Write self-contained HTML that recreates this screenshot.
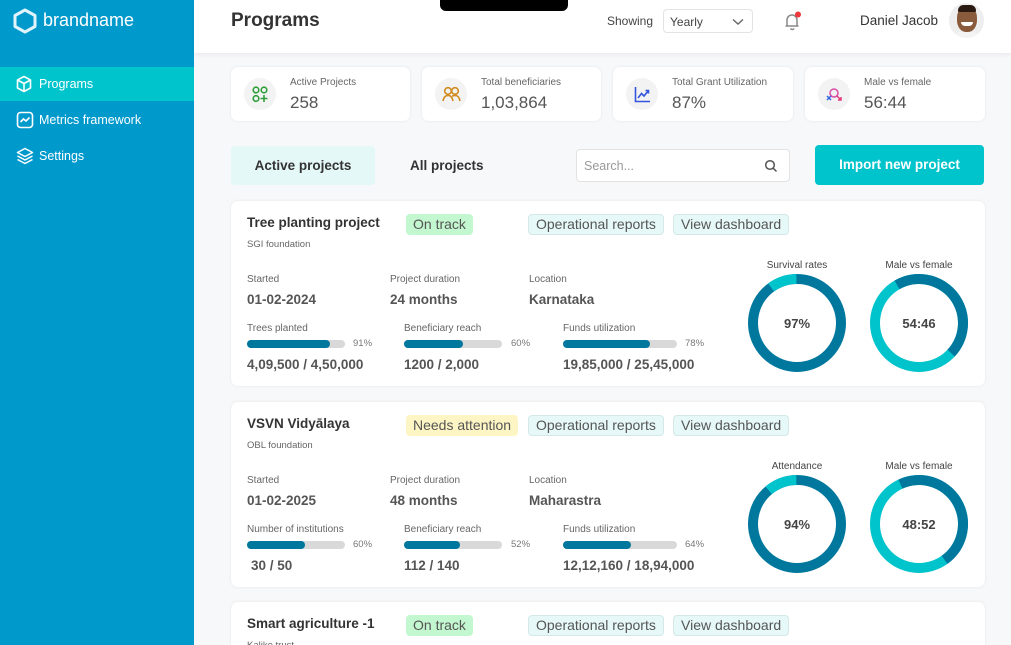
<!DOCTYPE html>
<html style="width:1011px;height:645px;overflow:hidden"><head><meta charset="utf-8"><style>
*{margin:0;padding:0;box-sizing:border-box}
body{width:1011px;height:645px;overflow:hidden;font-family:"Liberation Sans",sans-serif;background:#f7f8fa;position:relative;color:#333}
.a{position:absolute}
.side{left:0;top:0;width:194px;height:645px;background:#0099cc}
.nav{left:0;width:194px;height:34px;color:#fff;font-size:12.5px;line-height:34px;padding-left:39px}
.nav svg{position:absolute;left:16px;top:8px}
.hdr{left:194px;top:0;width:817px;height:53px;background:#fff;box-shadow:0 2px 4px rgba(0,0,0,.06)}
.stat{top:67px;height:54px;background:#fff;border-radius:7px;box-shadow:0 0 3px rgba(0,0,0,.08)}
.stat .ic{position:absolute;left:13px;top:11px;width:32px;height:32px;border-radius:50%;background:#f3f3f3}
.stat .l{position:absolute;left:59px;top:10px;font-size:10px;color:#666}
.stat .v{position:absolute;left:59px;top:26px;font-size:17px;color:#555}
.card{left:231px;width:754px;height:185px;background:#fff;border-radius:7px;box-shadow:0 0 3px rgba(0,0,0,.08);overflow:hidden}
.card .t{position:absolute;left:16px;top:14px;font-size:13.5px;font-weight:bold;color:#333}
.card .s{position:absolute;left:16px;top:38px;font-size:9.5px;color:#666}
.badge{position:absolute;top:13px;height:21px;line-height:21px;border-radius:4px;font-size:14px;padding:0 7px;color:#555}
.ob{background:#e6f8f8;border:1px solid #d4e8e8;line-height:19px}
.lb{position:absolute;font-size:10px;color:#666}
.vl{position:absolute;font-size:13.5px;color:#555;font-weight:bold}
.bar{position:absolute;height:8px;border-radius:4px;background:#d9d9d9;top:139px}
.bar i{display:block;height:8px;border-radius:4px;background:#00789e}
.pc{position:absolute;top:137px;font-size:9.5px;color:#777}
.dl{position:absolute;top:59px;font-size:10px;color:#444;width:100px;text-align:center}
.dn{position:absolute;top:73px}
</style></head><body>
<div class="a side"></div>
<svg class="a" style="left:12px;top:8px" width="26" height="26" viewBox="0 0 26 26"><path d="M13 2 L23 7.5 V18.5 L13 24 L3 18.5 V7.5 Z" fill="none" stroke="#dff4fb" stroke-width="3" stroke-linejoin="round"/></svg>
<div class="a" style="left:43px;top:10px;color:#fff;font-size:18px">brandname</div>
<div class="a nav" style="top:67px;background:#00c4cc"><svg width="16" height="18" viewBox="0 0 16 18" fill="none" stroke="#fff" stroke-width="1.6" stroke-linejoin="round"><path d="M8 1.5 L14.5 5 V13 L8 16.5 L1.5 13 V5 Z M1.5 5 L8 8.5 L14.5 5 M8 8.5 V16.5"/></svg>Programs</div>
<div class="a nav" style="top:103px"><svg width="18" height="18" viewBox="0 0 18 18" fill="none" stroke="#fff" stroke-width="1.6"><rect x="1.5" y="1.5" width="15" height="15" rx="3"/><path d="M4.5 11 L7.5 8 L10 10 L13.5 6.5"/></svg>Metrics framework</div>
<div class="a nav" style="top:139px"><svg width="18" height="18" viewBox="0 0 18 18" fill="none" stroke="#fff" stroke-width="1.5" stroke-linejoin="round"><path d="M9 1.5 L16.5 5.5 L9 9.5 L1.5 5.5 Z M1.5 9 L9 13 L16.5 9 M1.5 12.5 L9 16.5 L16.5 12.5"/></svg>Settings</div>

<div class="a hdr"></div>
<div class="a" style="left:440px;top:0;width:128px;height:11px;background:#000;border-radius:0 0 6px 6px"></div>
<div class="a" style="left:231px;top:10px;font-size:19px;font-weight:bold;color:#333">Programs</div>
<div class="a" style="left:607px;top:14px;font-size:12px;color:#444">Showing</div>
<div class="a" style="left:663px;top:9px;width:90px;height:24px;border:1px solid #e3e3e3;border-radius:4px;font-size:12px;color:#444;padding:5px 0 0 6px">Yearly
<svg class="a" style="left:68px;top:8px" width="12" height="8" viewBox="0 0 12 8"><path d="M1 1.5 L6 6 L11 1.5" fill="none" stroke="#666" stroke-width="1.4"/></svg></div>
<svg class="a" style="left:782px;top:10px" width="22" height="22" viewBox="0 0 22 22" fill="none" stroke="#888" stroke-width="1.5"><path d="M5 16 V10 a5 5 0 0 1 10 0 V16 Z M3.5 16 H16.5 M8.5 18.5 a2 2 0 0 0 3.5 0"/><circle cx="16" cy="4.5" r="3" fill="#f0373c" stroke="none"/></svg>
<div class="a" style="left:860px;top:13px;font-size:13.5px;color:#333">Daniel Jacob</div>
<div class="a" style="left:949px;top:3px;width:35px;height:35px;border-radius:50%;background:#eee;overflow:hidden">
<div class="a" style="left:8px;top:3px;width:20px;height:26px;border-radius:45%;background:#8a5a3c"></div>
<div class="a" style="left:9px;top:2px;width:18px;height:7px;border-radius:8px 8px 2px 2px;background:#2a1a12"></div>
<div class="a" style="left:12px;top:19px;width:12px;height:4px;border-radius:0 0 6px 6px;background:#fff"></div>
<div class="a" style="left:4px;top:29px;width:28px;height:10px;border-radius:8px 8px 0 0;background:#f4f4f4"></div></div>

<div class="a stat" style="left:231px;width:179px"><div class="ic"><svg style="position:absolute;left:8px;top:8px" width="17" height="17" viewBox="0 0 17 17" fill="none" stroke="#2e9e3a" stroke-width="1.6"><circle cx="4" cy="4" r="2.8"/><circle cx="12" cy="4" r="2.8"/><circle cx="4" cy="12.5" r="2.8"/><path d="M12 9 V16 M8.5 12.5 H15.5"/></svg></div><div class="l">Active Projects</div><div class="v">258</div></div>
<div class="a stat" style="left:422px;width:179px"><div class="ic"><svg style="position:absolute;left:7px;top:8px" width="19" height="16" viewBox="0 0 19 16" fill="none" stroke="#d08a1e" stroke-width="1.6"><circle cx="6" cy="5" r="3.3"/><circle cx="13" cy="5" r="3.3"/><path d="M1 15 Q2 9.5 6 9.5 Q10 9.5 11 15 M10 10 Q12 9.5 14 9.5 Q17 10 18 15"/></svg></div><div class="l">Total beneficiaries</div><div class="v">1,03,864</div></div>
<div class="a stat" style="left:613px;width:180px"><div class="ic"><svg style="position:absolute;left:8px;top:8px" width="17" height="17" viewBox="0 0 17 17" fill="none" stroke="#3355dd" stroke-width="1.6"><path d="M1.5 1 V15.5 H16 M4 12 L7.5 7.5 L10 10 L14.5 4.5 M11.5 4.5 H14.5 V7.5"/></svg></div><div class="l">Total Grant Utilization</div><div class="v">87%</div></div>
<div class="a stat" style="left:805px;width:180px"><div class="ic"><svg style="position:absolute;left:7px;top:7px" width="19" height="19" viewBox="0 0 19 19" fill="none" stroke-width="1.5"><circle cx="9" cy="8" r="4" stroke="#d94ea8"/><path d="M12 11 L16 15 M16 12 V15 H13" stroke="#e33a7a"/><path d="M2 11 L6 15 M6 11 L2 15" stroke="#3366dd"/></svg></div><div class="l">Male vs female</div><div class="v">56:44</div></div>

<div class="a" style="left:231px;top:146px;width:144px;height:39px;background:#e5f8f8;border-radius:4px;font-size:13.5px;font-weight:bold;color:#333;text-align:center;line-height:39px">Active projects</div>
<div class="a" style="left:410px;top:158px;font-size:13.5px;font-weight:bold;color:#333">All projects</div>
<div class="a" style="left:576px;top:149px;width:214px;height:33px;background:#fff;border:1px solid #e3e3e3;border-radius:4px;font-size:12.5px;color:#999;padding:9px 0 0 7px">Search...
<svg class="a" style="left:187px;top:9px" width="14" height="14" viewBox="0 0 14 14" fill="none" stroke="#555" stroke-width="1.5"><circle cx="6" cy="6" r="4.3"/><path d="M9.2 9.2 L12.5 12.5"/></svg></div>
<div class="a" style="left:815px;top:145px;width:169px;height:40px;background:#00c4cc;border-radius:4px;color:#fff;font-size:13.5px;font-weight:bold;text-align:center;line-height:40px">Import new project</div>

<div class="a card" style="top:201px">
<div class="t">Tree planting project</div><div class="s">SGI foundation</div>
<div class="badge" style="left:175px;background:#c3f7cf">On track</div>
<div class="badge ob" style="left:297px">Operational reports</div>
<div class="badge ob" style="left:442px">View dashboard</div>
<div class="lb" style="left:16px;top:73px">Started</div><div class="lb" style="left:159px;top:73px">Project duration</div><div class="lb" style="left:298px;top:73px">Location</div>
<div class="vl" style="left:16px;top:91px">01-02-2024</div><div class="vl" style="left:159px;top:91px">24 months</div><div class="vl" style="left:298px;top:91px">Karnataka</div>
<div class="lb" style="left:16px;top:122px">Trees planted</div><div class="lb" style="left:173px;top:122px">Beneficiary reach</div><div class="lb" style="left:332px;top:122px">Funds utilization</div>
<div class="bar" style="left:16px;width:98px"><i style="width:83px"></i></div><div class="pc" style="left:122px">91%</div>
<div class="bar" style="left:173px;width:98px"><i style="width:59px"></i></div><div class="pc" style="left:280px">60%</div>
<div class="bar" style="left:332px;width:114px"><i style="width:87px"></i></div><div class="pc" style="left:454px">78%</div>
<div class="vl" style="left:16px;top:156px">4,09,500 / 4,50,000</div><div class="vl" style="left:173px;top:156px">1200 / 2,000</div><div class="vl" style="left:332px;top:156px">19,85,000 / 25,45,000</div>
<div class="dl" style="left:516px">Survival rates</div><div class="dl" style="left:638px">Male vs female</div>
<svg class="dn" style="left:517px" width="98" height="98" viewBox="0 0 98 98"><circle cx="49" cy="49" r="44" fill="none" stroke="#00789e" stroke-width="10"/><circle cx="49" cy="49" r="44" fill="none" stroke="#00c4cc" stroke-width="10" stroke-dasharray="27 260" transform="rotate(-126 49 49)"/><text x="49" y="54" text-anchor="middle" font-size="13" font-weight="bold" fill="#444" font-family="Liberation Sans">97%</text></svg>
<svg class="dn" style="left:639px" width="98" height="98" viewBox="0 0 98 98"><circle cx="49" cy="49" r="44" fill="none" stroke="#00c4cc" stroke-width="10"/><circle cx="49" cy="49" r="44" fill="none" stroke="#00789e" stroke-width="10" stroke-dasharray="125 160" transform="rotate(-120 49 49)"/><text x="49" y="54" text-anchor="middle" font-size="13" font-weight="bold" fill="#444" font-family="Liberation Sans">54:46</text></svg>
</div>

<div class="a card" style="top:402px">
<div class="t">VSVN Vidyālaya</div><div class="s">OBL foundation</div>
<div class="badge" style="left:175px;background:#fdf5c4">Needs attention</div>
<div class="badge ob" style="left:297px">Operational reports</div>
<div class="badge ob" style="left:442px">View dashboard</div>
<div class="lb" style="left:16px;top:73px">Started</div><div class="lb" style="left:159px;top:73px">Project duration</div><div class="lb" style="left:298px;top:73px">Location</div>
<div class="vl" style="left:16px;top:91px">01-02-2025</div><div class="vl" style="left:159px;top:91px">48 months</div><div class="vl" style="left:298px;top:91px">Maharastra</div>
<div class="lb" style="left:16px;top:122px">Number of institutions</div><div class="lb" style="left:173px;top:122px">Beneficiary reach</div><div class="lb" style="left:332px;top:122px">Funds utilization</div>
<div class="bar" style="left:16px;width:98px"><i style="width:58px"></i></div><div class="pc" style="left:122px">60%</div>
<div class="bar" style="left:173px;width:98px"><i style="width:56px"></i></div><div class="pc" style="left:280px">52%</div>
<div class="bar" style="left:332px;width:114px"><i style="width:68px"></i></div><div class="pc" style="left:454px">64%</div>
<div class="vl" style="left:20px;top:156px">30 / 50</div><div class="vl" style="left:173px;top:156px">112 / 140</div><div class="vl" style="left:332px;top:156px">12,12,160 / 18,94,000</div>
<div class="dl" style="left:516px">Attendance</div><div class="dl" style="left:638px">Male vs female</div>
<svg class="dn" style="left:517px" width="98" height="98" viewBox="0 0 98 98"><circle cx="49" cy="49" r="44" fill="none" stroke="#00789e" stroke-width="10"/><circle cx="49" cy="49" r="44" fill="none" stroke="#00c4cc" stroke-width="10" stroke-dasharray="30 260" transform="rotate(-130 49 49)"/><text x="49" y="54" text-anchor="middle" font-size="13" font-weight="bold" fill="#444" font-family="Liberation Sans">94%</text></svg>
<svg class="dn" style="left:639px" width="98" height="98" viewBox="0 0 98 98"><circle cx="49" cy="49" r="44" fill="none" stroke="#00c4cc" stroke-width="10"/><circle cx="49" cy="49" r="44" fill="none" stroke="#00789e" stroke-width="10" stroke-dasharray="130 160" transform="rotate(-115 49 49)"/><text x="49" y="54" text-anchor="middle" font-size="13" font-weight="bold" fill="#444" font-family="Liberation Sans">48:52</text></svg>
</div>

<div class="a card" style="top:602px;height:43px;border-radius:7px 7px 0 0">
<div class="t">Smart agriculture -1</div><div class="s">Kalike trust</div>
<div class="badge" style="left:175px;background:#c3f7cf">On track</div>
<div class="badge ob" style="left:297px">Operational reports</div>
<div class="badge ob" style="left:442px">View dashboard</div>
</div>
</body></html>
